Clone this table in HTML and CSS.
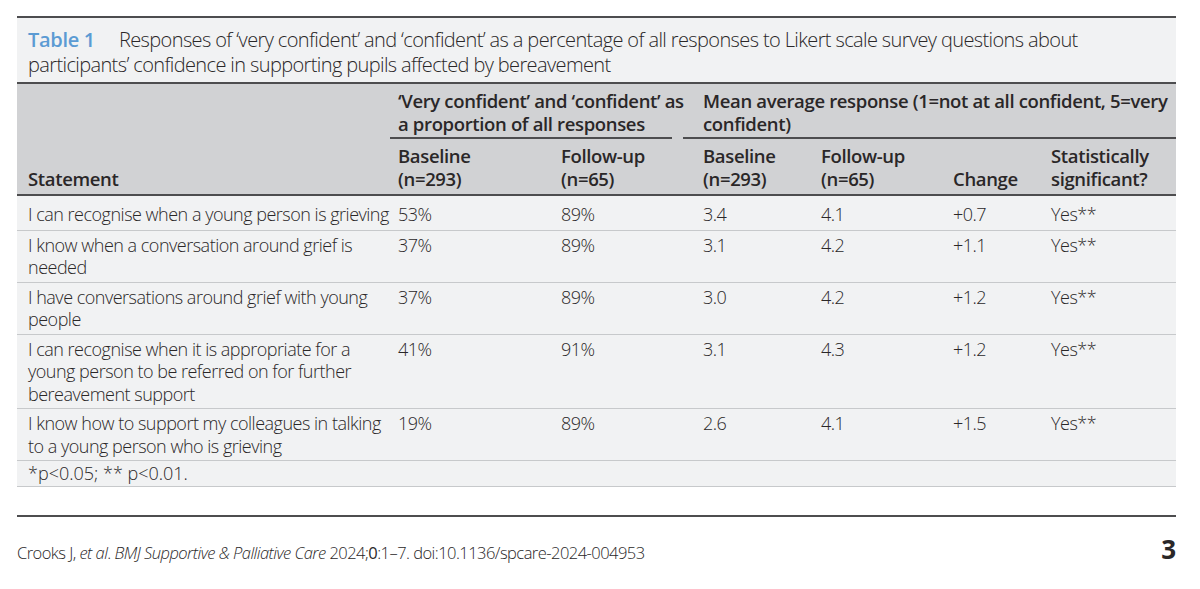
FILE: index.html
```html
<!DOCTYPE html>
<html lang="en">
<head>
<meta charset="utf-8">
<title>Table 1</title>
<link rel="stylesheet" href="styles.css">
</head>
<body>
<div class="page">
  <div class="caption">
    <span class="label">Table 1</span>Responses of ‘very confident’ and ‘confident’ as a percentage of all responses to Likert scale survey questions about<br>participants’ confidence in supporting pupils affected by bereavement
  </div>
  <table class="data">
    <colgroup>
      <col class="c-stmt"><col class="c-b1"><col class="c-f1"><col class="c-b2"><col class="c-f2"><col class="c-ch"><col class="c-sig">
    </colgroup>
    <thead>
      <tr class="hr1">
        <th></th>
        <th colspan="2" class="grp"><div class="grp-in g1">‘Very confident’ and ‘confident’ as<br>a proportion of all responses</div></th>
        <th colspan="4" class="grp"><div class="grp-in g2">Mean average response (1=not at all confident, 5=very<br>confident)</div></th>
      </tr>
      <tr class="hr2">
        <th class="stmt">Statement</th>
        <th>Baseline<br>(n=293)</th>
        <th>Follow-up<br>(n=65)</th>
        <th class="wide">Baseline<br>(n=293)</th>
        <th>Follow-up<br>(n=65)</th>
        <th>Change</th>
        <th>Statistically<br>significant?</th>
      </tr>
    </thead>
    <tbody>
      <tr class="first">
        <td class="stmt">I can recognise when a young person is grieving</td>
        <td>53%</td><td>89%</td><td class="wide">3.4</td><td>4.1</td><td>+0.7</td><td>Yes**</td>
      </tr>
      <tr>
        <td class="stmt">I know when a conversation around grief is<br>needed</td>
        <td>37%</td><td>89%</td><td class="wide">3.1</td><td>4.2</td><td>+1.1</td><td>Yes**</td>
      </tr>
      <tr>
        <td class="stmt">I have conversations around grief with young<br>people</td>
        <td>37%</td><td>89%</td><td class="wide">3.0</td><td>4.2</td><td>+1.2</td><td>Yes**</td>
      </tr>
      <tr>
        <td class="stmt">I can recognise when it is appropriate for a<br>young person to be referred on for further<br>bereavement support</td>
        <td>41%</td><td>91%</td><td class="wide">3.1</td><td>4.3</td><td>+1.2</td><td>Yes**</td>
      </tr>
      <tr>
        <td class="stmt">I know how to support my colleagues in talking<br>to a young person who is grieving</td>
        <td>19%</td><td>89%</td><td class="wide">2.6</td><td>4.1</td><td>+1.5</td><td>Yes**</td>
      </tr>
      <tr class="note">
        <td colspan="7" class="stmt">*p&lt;0.05; ** p&lt;0.01.</td>
      </tr>
    </tbody>
  </table>
  <footer class="foot">
    <div class="cite">Crooks J, <i>et al</i>. <i>BMJ Supportive &amp; Palliative Care</i> 2024;<b>0</b>:1–7. doi:10.1136/spcare-2024-004953</div>
    <div class="pageno">3</div>
  </footer>
</div>
</body>
</html>
```
FILE: styles.css
```css
html, body {
  margin: 0;
  padding: 0;
  background: #ffffff;
}

body {
  font-family: "Open Sans", "DejaVu Sans Condensed", sans-serif;
  font-weight: 340;
  color: #2a2728;
}

.page {
  width: 1159px;
  margin-left: 17px;
  padding-top: 16px;
}

.caption {
  background: #f1f2f3;
  border-top: 2px solid #4d4d4f;
  border-bottom: 2px solid #4d4d4f;
  padding: 9px 11px 5px 11px;
  font-size: 20px;
  line-height: 25px;
  letter-spacing: -0.62px;
  white-space: nowrap;
}

.caption .label {
  color: #5b9bd3;
  font-weight: 600;
  letter-spacing: -0.3px;
  margin-right: 24px;
}

.data {
  width: 1159px;
  border-collapse: collapse;
  table-layout: fixed;
  font-size: 18px;
  line-height: 22.5px;
  letter-spacing: -0.5px;
}

.c-stmt { width: 373px; }
.c-b1 { width: 163px; }
.c-f1 { width: 130px; }
.c-b2 { width: 130px; }
.c-f2 { width: 132px; }
.c-ch { width: 98px; }
.c-sig { width: 133px; }

thead {
  background: #d1d2d4;
}

th {
  text-align: left;
  font-size: 18.5px;
  font-weight: 600;
  letter-spacing: -0.35px;
  white-space: nowrap;
  padding: 0 0 0 8px;
}

.hr1 th {
  padding: 6px 0 0 0;
  vertical-align: top;
}

.grp-in {
  border-bottom: 2px solid #4d4d4f;
  padding-bottom: 2px;
}

.g1 {
  padding-left: 8px;
  margin-right: 11px;
}

.g2 {
  padding-left: 20px;
}

.hr2 th {
  padding-top: 6px;
  padding-bottom: 4px;
  vertical-align: bottom;
  border-bottom: 2px solid #4d4d4f;
}

.hr2 th.stmt,
td.stmt {
  padding-left: 11px;
}

th.wide,
td.wide {
  padding-left: 20px;
}

tbody {
  background: #f1f2f3;
}

td {
  vertical-align: top;
  padding: 3px 0 3px 8px;
  white-space: nowrap;
  border-bottom: 1px solid #c7c9cb;
}

tr.first td {
  padding-top: 7px;
  padding-bottom: 4px;
}

tr.note td {
  padding-top: 1px;
  padding-bottom: 1px;
  font-size: 18px;
  letter-spacing: 0;
}

.foot {
  margin-top: 28px;
  border-top: 2px solid #4d4d4f;
  display: flex;
  justify-content: space-between;
  align-items: baseline;
  padding-top: 19px;
}

.cite {
  font-size: 16.5px;
  line-height: 20px;
  letter-spacing: -0.54px;
}

.pageno {
  font-size: 26px;
  font-weight: 700;
  line-height: 26px;
}
```
